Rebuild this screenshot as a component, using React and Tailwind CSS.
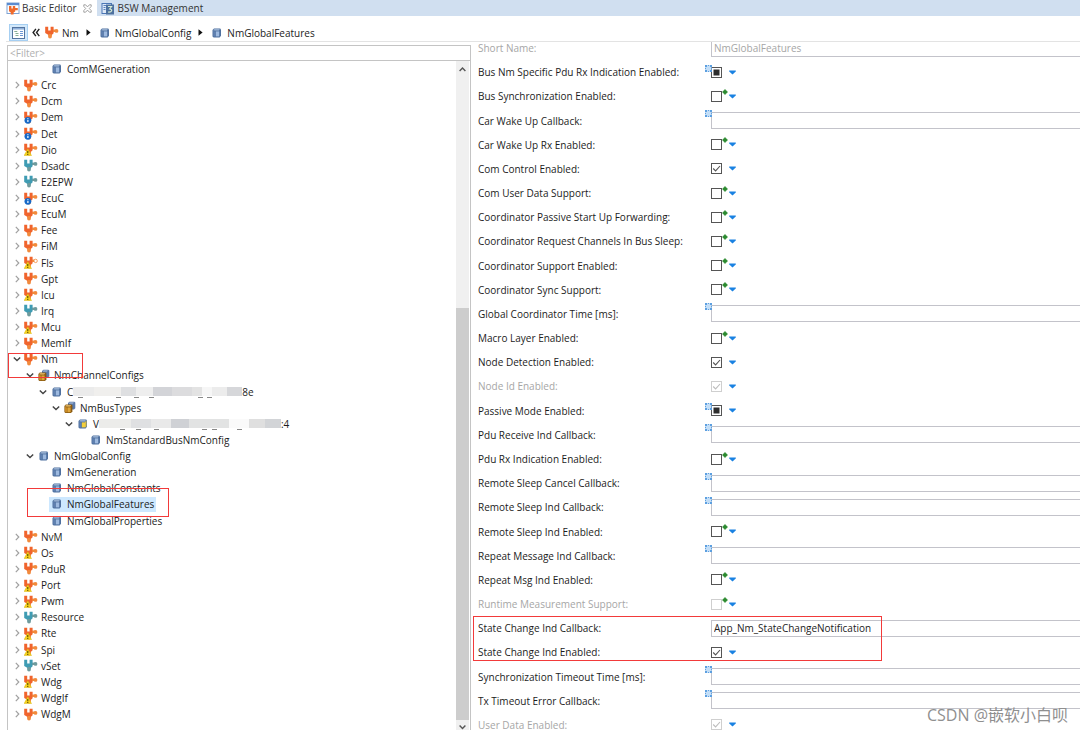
import { useState } from 'react';

const TREE = [
  { name: 'ComMGeneration', level: 2, icon: 'cube' },
  { name: 'Crc', icon: 'mod', closed: true },
  { name: 'Dcm', icon: 'mod', closed: true },
  { name: 'Dem', icon: 'mod', badge: 'info', closed: true },
  { name: 'Det', icon: 'mod', badge: 'info', closed: true },
  { name: 'Dio', icon: 'mod', badge: 'warn', closed: true },
  { name: 'Dsadc', icon: 'ext', closed: true },
  { name: 'E2EPW', icon: 'ext', closed: true },
  { name: 'EcuC', icon: 'mod', badge: 'info', closed: true },
  { name: 'EcuM', icon: 'mod', closed: true },
  { name: 'Fee', icon: 'mod', closed: true },
  { name: 'FiM', icon: 'mod', closed: true },
  { name: 'Fls', icon: 'mod', badge: 'warn', hollow: true, closed: true },
  { name: 'Gpt', icon: 'mod', closed: true },
  { name: 'Icu', icon: 'mod', badge: 'warn', closed: true },
  { name: 'Irq', icon: 'ext', closed: true },
  { name: 'Mcu', icon: 'mod', badge: 'warn', closed: true },
  { name: 'MemIf', icon: 'mod', closed: true },
  { name: 'Nm', icon: 'mod', open: true, mark: 'module' },
  { name: 'NmChannelConfigs', level: 1, icon: 'cubes', open: true },
  { name: 'C', tail: '8e', level: 2, icon: 'cube', open: true, mosaic: 'channel' },
  { name: 'NmBusTypes', level: 3, icon: 'cubes', open: true },
  { name: 'V', tail: ':4', level: 4, icon: 'variant', open: true, mosaic: 'bus' },
  { name: 'NmStandardBusNmConfig', level: 5, icon: 'cube' },
  { name: 'NmGlobalConfig', level: 1, icon: 'cube', open: true },
  { name: 'NmGeneration', level: 2, icon: 'cube' },
  { name: 'NmGlobalConstants', level: 2, icon: 'cube' },
  { name: 'NmGlobalFeatures', level: 2, icon: 'cube', selected: true, mark: 'item' },
  { name: 'NmGlobalProperties', level: 2, icon: 'cube' },
  { name: 'NvM', icon: 'mod', closed: true },
  { name: 'Os', icon: 'mod', badge: 'warn', closed: true },
  { name: 'PduR', icon: 'mod', closed: true },
  { name: 'Port', icon: 'mod', badge: 'warn', closed: true },
  { name: 'Pwm', icon: 'mod', badge: 'warn', closed: true },
  { name: 'Resource', icon: 'ext', closed: true },
  { name: 'Rte', icon: 'mod', badge: 'warn', closed: true },
  { name: 'Spi', icon: 'mod', badge: 'warn', closed: true },
  { name: 'vSet', icon: 'ext', closed: true },
  { name: 'Wdg', icon: 'mod', badge: 'warn', closed: true },
  { name: 'WdgIf', icon: 'mod', badge: 'warn', closed: true },
  { name: 'WdgM', icon: 'mod', closed: true },
];

// kind: text | on | off | mixed
const FIELDS = [
  { label: 'Short Name', kind: 'text', value: 'NmGlobalFeatures', disabled: true },
  { label: 'Bus Nm Specific Pdu Rx Indication Enabled', kind: 'mixed' },
  { label: 'Bus Synchronization Enabled', kind: 'off' },
  { label: 'Car Wake Up Callback', kind: 'text', unset: true },
  { label: 'Car Wake Up Rx Enabled', kind: 'off' },
  { label: 'Com Control Enabled', kind: 'on' },
  { label: 'Com User Data Support', kind: 'off' },
  { label: 'Coordinator Passive Start Up Forwarding', kind: 'off' },
  { label: 'Coordinator Request Channels In Bus Sleep', kind: 'off' },
  { label: 'Coordinator Support Enabled', kind: 'off' },
  { label: 'Coordinator Sync Support', kind: 'off' },
  { label: 'Global Coordinator Time [ms]', kind: 'text', unset: true },
  { label: 'Macro Layer Enabled', kind: 'off' },
  { label: 'Node Detection Enabled', kind: 'on' },
  { label: 'Node Id Enabled', kind: 'on', disabled: true },
  { label: 'Passive Mode Enabled', kind: 'mixed' },
  { label: 'Pdu Receive Ind Callback', kind: 'text', unset: true },
  { label: 'Pdu Rx Indication Enabled', kind: 'off' },
  { label: 'Remote Sleep Cancel Callback', kind: 'text', unset: true },
  { label: 'Remote Sleep Ind Callback', kind: 'text', unset: true },
  { label: 'Remote Sleep Ind Enabled', kind: 'off' },
  { label: 'Repeat Message Ind Callback', kind: 'text', unset: true },
  { label: 'Repeat Msg Ind Enabled', kind: 'off' },
  { label: 'Runtime Measurement Support', kind: 'off', disabled: true },
  { label: 'State Change Ind Callback', kind: 'text', value: 'App_Nm_StateChangeNotification', mark: true },
  { label: 'State Change Ind Enabled', kind: 'on' },
  { label: 'Synchronization Timeout Time [ms]', kind: 'text', unset: true },
  { label: 'Tx Timeout Error Callback', kind: 'text', unset: true },
  { label: 'User Data Enabled', kind: 'on', disabled: true },
];

const MOSAIC = {
  channel: {
    blocks: [[0, 21, '#ebebeb'], [21, 27, '#f0efed'], [48, 15, '#dedfe1'], [63, 17, '#eeeeee'], [80, 19, '#d3d4d8'], [99, 20, '#dcdcde'], [119, 10, '#e3e3e3'], [129, 10, '#f6f6f6'], [139, 15, '#ececec'], [154, 15, '#d6d7da']],
    bits: [[5, 5], [43, 5], [61, 5], [76, 5], [125, 5], [134, 5]],
  },
  bus: {
    blocks: [[0, 32, '#ececea'], [32, 20, '#dfe0e2'], [52, 20, '#e9e9e9'], [72, 18, '#cfd1d5'], [90, 40, '#e2e3e3'], [130, 20, '#fafafa'], [150, 16, '#dfdfdf'], [166, 16, '#d2d4d7']],
    bits: [[21, 5], [37, 5], [55, 5], [103, 5], [113, 5], [138, 5]],
  },
};

function Mosaic({ kind }) {
  const { blocks, bits } = MOSAIC[kind];
  const width = kind === 'channel' ? 169 : 182;
  return (
    <svg width={width} height="14" viewBox={`0 0 ${width} 14`} className="shrink-0" aria-hidden="true">
      {blocks.map(([x, w, fill]) => <rect key={x} x={x} y="2" width={w} height="9" fill={fill} />)}
      {bits.map(([x, w]) => <rect key={x} x={x} y="12" width={w} height="1" fill="#888" />)}
    </svg>
  );
}

function ModuleIcon({ ext, badge, hollow }) {
  const main = ext ? '#3f9cb3' : '#f0642d';
  const arm = ext ? '#6f9a9c' : '#f18a3c';
  return (
    <svg width="14" height="13" viewBox="0 0 14 13" className="shrink-0" aria-hidden="true">
      <path d="M0.2 0.8h3v3.6h2.4V0.8h3v3h2.2v2.2H8.6v1.2L7 8.8v1H3.2v-1L0.2 7z" fill={main} />
      <path d="M3.6 8h2.8v2H3.6z" fill={arm} />
      <circle cx="5" cy="10.6" r="1.9" fill={arm} />
      <path d="M8.2 3.8h3v2.2h-3z" fill={arm} />
      {hollow
        ? <circle cx="11.6" cy="4.9" r="1.7" fill="#fff" stroke={arm} strokeWidth="0.8" />
        : <circle cx="11.5" cy="4.9" r="1.9" fill={arm} />}
      {badge === 'info' && (
        <g>
          <circle cx="3.9" cy="9.3" r="3.4" fill="#1769c7" />
          <path d="M3.3 8.9h1.2v2.2H3.3zM3.3 7.2h1.2v1H3.3z" fill="#fff" />
        </g>
      )}
      {badge === 'warn' && (
        <g>
          <path d="M3.8 5.8L7.5 12.6H0.1z" fill="#f5d21c" stroke="#d8b510" strokeWidth="0.5" />
          <path d="M3.3 8h1v2.2h-1zM3.3 10.9h1v1h-1z" fill="#4a3d00" />
        </g>
      )}
    </svg>
  );
}

function CubeIcon({ variant }) {
  return (
    <svg width="14" height="12" viewBox="0 0 14 12" className="shrink-0" aria-hidden="true">
      <path d="M2.5 3L4 1.6h6.2L11 2.4v6.4L9.6 10.4H3.6L2.5 9.4z" fill="#4f709f" />
      <path d="M3.2 3.2L4.4 2.2h5.4l-1 1.4H5.6z" fill="#a9c0de" />
      <path d="M3.2 4l2 0.6v5H4L3.2 9z" fill="#5f80b0" />
      <path d="M5.8 4.4h3.4v5H5.8z" fill={variant ? '#f4cf3a' : '#9db9df'} />
      {variant && <path d="M9.2 3.8l1.2-1v5.8l-1.2 1z" fill="#f4cf3a" />}
    </svg>
  );
}

function CubesIcon() {
  return (
    <svg width="14" height="13" viewBox="0 0 14 13" className="shrink-0" aria-hidden="true">
      <path d="M5 2l1.4-1.2h5L12.3 1.6v5.6L11 8.6H5z" fill="#5b79a8" />
      <path d="M6 2l0.8-0.6h4L10 2.4H6z" fill="#b4c8e2" />
      <path d="M1.4 5L2.8 3.4h5.6L9.4 4.2v6.2L8 12H2.4L1.4 11z" fill="#8a5a10" />
      <path d="M2 5.2l1-1h5.2L7.2 5.6H4z" fill="#f0c772" />
      <path d="M2 6l2 0.6v4.6H2.8L2 10.6z" fill="#c98a24" />
      <path d="M4.4 6.4h3.2v4.8H4.4z" fill="#e0a63c" />
    </svg>
  );
}

function NodeIcon({ node }) {
  if (node.icon === 'cubes') return <CubesIcon />;
  if (node.icon === 'cube') return <CubeIcon />;
  if (node.icon === 'variant') return <CubeIcon variant />;
  return <ModuleIcon ext={node.icon === 'ext'} badge={node.badge} hollow={node.hollow} />;
}

function Twisty({ open, closed }) {
  return (
    <svg width="10" height="10" viewBox="0 0 10 10" className="shrink-0" fill="none" aria-hidden="true">
      {open && <path d="M1.8 3.5L5 6.6L8.2 3.5" stroke="#444" strokeWidth="1.4" />}
      {closed && <path d="M3.8 1.8L6.8 5L3.8 8.2" stroke="#a0a0a0" strokeWidth="1.2" />}
    </svg>
  );
}

function TreeRow({ node, selected, onSelect }) {
  const indent = 4 + (node.level || 0) * 13;
  return (
    <li className="relative flex min-h-0 flex-1 items-center" style={{ paddingLeft: indent }}>
      <Twisty open={node.open} closed={node.closed} />
      <button
        type="button"
        onClick={onSelect}
        className={`ml-px flex h-[15px] items-center pl-px pr-0.5 ${selected ? 'bg-[#cde8ff]' : ''}`}
      >
        <NodeIcon node={node} />
        <span className="ml-[3px] whitespace-nowrap">{node.name}</span>
        {node.mosaic && <Mosaic kind={node.mosaic} />}
        {node.tail && <span>{node.tail}</span>}
      </button>
      {node.mark === 'module' && <span className="pointer-events-none absolute left-0 top-0.5 z-10 h-[25px] w-[75px] border border-[#f23a3a]" />}
      {node.mark === 'item' && <span className="pointer-events-none absolute -top-2 left-[19px] z-10 h-[29px] w-[142px] border border-[#f23a3a]" />}
    </li>
  );
}

function UnsetMark() {
  return (
    <svg width="7" height="7" viewBox="0 0 7 7" className="absolute -left-1.5 -top-0.5" aria-hidden="true">
      <rect x="0.5" y="0.5" width="6" height="6" fill="#c3def7" />
      <path d="M0 0h2v2H0zM2.8 0h1.4v1H2.8zM5 0h2v2H5zM0 5h2v2H0zM2.8 6h1.4v1H2.8zM5 5h2v2H5zM0 2.8h1v1.4H0zM6 2.8h1v1.4H6z" fill="#5c9fe0" />
    </svg>
  );
}

function Field({ field }) {
  const [value, setValue] = useState(field.value || '');
  const [state, setState] = useState(field.kind);
  const id = field.label.toLowerCase().replace(/[^a-z]+/g, '-');
  const grey = field.disabled;

  return (
    <div className="relative flex min-h-0 flex-1 items-center">
      <label htmlFor={id} className={`w-[235px] shrink-0 pl-0.5 leading-[10px] ${grey ? 'text-[#a6a6a6]' : ''}`}>{field.label}:</label>
      {field.kind === 'text' ? (
        <div className="relative min-w-0 flex-1">
          {field.unset && <UnsetMark />}
          <input
            id={id}
            type="text"
            value={value}
            disabled={grey}
            onChange={(e) => setValue(e.target.value)}
            className={`block h-[17px] w-full border border-r-0 border-[#c3c3ca] bg-white px-0.5 focus:outline-none ${grey ? 'text-[#a6a6a6]' : ''}`}
          />
        </div>
      ) : (
        <div className="relative flex items-center">
          {state === 'mixed' && <UnsetMark />}
          <input
            id={id}
            type="checkbox"
            checked={state === 'on'}
            disabled={grey}
            onChange={() => setState(state === 'on' ? 'off' : 'on')}
            className={`size-[11px] appearance-none border bg-white ${grey ? 'border-[#cfcfcf]' : 'border-[#555]'}`}
          />
          <svg width="11" height="11" viewBox="0 0 11 11" className="pointer-events-none absolute left-0 top-0" fill="none" aria-hidden="true">
            {state === 'on' && <path d="M2.2 5.5L4.6 7.9L9 3" stroke={grey ? '#bdbdbd' : '#555'} strokeWidth="1.1" />}
            {state === 'mixed' && <rect x="2.5" y="2.5" width="6" height="6" fill="#2d2d2d" />}
          </svg>
          {state === 'off' && (
            <svg width="6" height="6" viewBox="0 0 6 6" className="absolute -top-0.5 left-[11px]" aria-hidden="true">
              <circle cx="3" cy="3" r="2.1" fill="#2c8a30" />
              <path d="M3 0.2v5.6M0.2 3h5.6" stroke="#2c8a30" strokeWidth="1.1" />
            </svg>
          )}
          <button type="button" aria-label={`${field.label} options`} className="ml-[7px]">
            <svg width="7" height="5" viewBox="0 0 7 5" className="block" aria-hidden="true">
              <path d="M0.2 0.6h6.6v0.8L3.5 4.6L0.2 1.4z" fill="#1a82e2" />
            </svg>
          </button>
        </div>
      )}
      {field.mark && <span className="pointer-events-none absolute -left-[3px] top-0 z-10 h-[45px] w-[409px] border border-[#f23a3a]" />}
    </div>
  );
}

function Crumb({ icon, children }) {
  return (
    <a href="#" className="flex items-center gap-[3px]">
      {icon}
      {children}
    </a>
  );
}

function CrumbArrow() {
  return (
    <svg width="5" height="7" viewBox="0 0 5 7" className="shrink-0" aria-hidden="true">
      <path d="M0.5 0.3L4.6 3.5L0.5 6.7z" fill="#111" />
    </svg>
  );
}

export default function App() {
  const [selected, setSelected] = useState('NmGlobalFeatures');

  return (
    <div className="relative flex h-screen flex-col overflow-hidden bg-white font-['Open_Sans','Noto_Sans_CJK_SC',sans-serif] text-[10px] leading-[14px] text-[#1c1c1c]">
      <div role="tablist" className="flex h-4 shrink-0 bg-[#d0dff0] text-[#333]">
        <button type="button" role="tab" aria-selected="true" className="flex items-center bg-white pl-1.5 pr-[5px]">
          <svg width="14" height="13" viewBox="0 0 14 13" aria-hidden="true">
            <rect x="1" y="1" width="12" height="10.5" fill="#fff" stroke="#7fa3d4" />
            <rect x="1" y="1" width="12" height="2.2" fill="#5b8bd0" />
            <path d="M3 4h2.4v2.6h1.4V4h2.4v2h2.6v2.2H9.2v1.2L7.6 10.4v2.2H4.8v-2.2L3 9.2z" fill="#ef6a2c" />
          </svg>
          <span className="ml-0.5 whitespace-nowrap">Basic Editor</span>
          <svg width="9" height="9" viewBox="0 0 9 9" className="ml-1.5" fill="none" stroke="#8b8b8b" strokeWidth="0.8" aria-hidden="true">
            <path d="M0.8 0.8h1.8l1.9 2.1L6.4 0.8h1.8v1.6L6.3 4.5l1.9 2.1v1.6H6.4L4.5 6.1L2.6 8.2H0.8V6.6l1.9-2.1L0.8 2.4z" />
          </svg>
        </button>
        <button type="button" role="tab" aria-selected="false" className="flex items-center pl-1">
          <svg width="14" height="13" viewBox="0 0 14 13" aria-hidden="true">
            <rect x="1" y="1.5" width="9.5" height="10" fill="#dfe9f7" stroke="#4b76b5" />
            <path d="M2.5 3.5h3M2.5 5.5h2M2.5 7.5h2" stroke="#4b76b5" strokeWidth="0.9" />
            <rect x="5" y="2.5" width="8" height="10" fill="#4d719f" />
            <path d="M7 4.5h3.6L8.6 7c3.4 0 2.6 3.6-1.6 3" fill="none" stroke="#d9ecd4" strokeWidth="1.1" />
          </svg>
          <span className="ml-[3px] whitespace-nowrap">BSW Management</span>
        </button>
      </div>

      <nav className="ml-1.5 flex h-[26px] shrink-0 items-center border-b border-[#e3e3e3] pl-[3px] pt-2">
        <button type="button" aria-label="Show tree" className="flex h-[17px] w-[19px] items-center justify-center border border-[#a6cff2] bg-[#d3e9fb]">
          <svg width="13" height="12" viewBox="0 0 13 12" aria-hidden="true">
            <rect x="0.5" y="0.5" width="12" height="11" fill="#fff" stroke="#54749f" />
            <rect x="1" y="1" width="11" height="1.6" fill="#8fb0da" />
            <path d="M2.3 4.5h3M3.5 6.5h3M3.5 8.5h3" stroke="#79a68a" strokeWidth="0.9" />
            <path d="M8 4.5h3M8 6.5h3M8 8.5h3" stroke="#5b8bd0" strokeWidth="0.9" />
          </svg>
        </button>
        <svg width="8" height="9" viewBox="0 0 8 9" className="ml-1 mr-[5px]" fill="none" stroke="#222" strokeWidth="1.4" aria-hidden="true">
          <path d="M3.9 0.8L1.1 4.5L3.9 8.2M7.3 0.8L4.5 4.5L7.3 8.2" />
        </svg>
        <div className="flex items-center gap-[7px]">
          <Crumb icon={<ModuleIcon />}>Nm</Crumb>
          <CrumbArrow />
          <Crumb icon={<CubeIcon />}>NmGlobalConfig</Crumb>
          <CrumbArrow />
          <Crumb icon={<CubeIcon />}>NmGlobalFeatures</Crumb>
        </div>
      </nav>

      <main className="flex min-h-0 flex-1">
        <aside className="ml-[7px] mt-[3px] flex w-[464px] shrink-0 flex-col border-x border-[#c4c4c4]">
          <input
            type="text"
            aria-label="Filter"
            placeholder="<Filter>"
            className="h-4 w-full shrink-0 border-y border-[#c4c4c4] px-0.5 placeholder:text-[#b0b0b0] focus:outline-none"
          />
          <div className="flex min-h-0 flex-1">
            <ul className="mb-2 flex min-w-0 flex-1 flex-col">
              {TREE.map((node) => (
                <TreeRow key={node.name} node={node} selected={selected === node.name} onSelect={() => setSelected(node.name)} />
              ))}
            </ul>
            <div className="mr-px flex w-[13px] flex-col items-center bg-[#f0f0f0]">
              <svg width="13" height="16" viewBox="0 0 13 16" fill="none" stroke="#555" strokeWidth="1.4" aria-hidden="true">
                <path d="M3.6 10L6.5 7L9.4 10" />
              </svg>
              <div className="flex w-full flex-1 flex-col justify-end">
                <div className="h-[64%] bg-[#cdcdcd]" />
              </div>
              <svg width="13" height="10" viewBox="0 0 13 10" fill="none" stroke="#555" strokeWidth="1.4" aria-hidden="true">
                <path d="M3.6 5.5L6.5 8.5L9.4 5.5" />
              </svg>
            </div>
          </div>
        </aside>

        {/* settings list is scrolled, so the first and last rows are cut */}
        <section className="min-w-0 flex-1 overflow-hidden pl-[5px]">
          <form className="-mt-1.5 flex h-[calc(100%+13px)] flex-col">
            {FIELDS.map((field) => <Field key={field.label} field={field} />)}
          </form>
        </section>
      </main>

      <div className="pointer-events-none absolute bottom-1 right-3 text-[16px] leading-[22px] text-[#8f8f8f]">CSDN @嵌软小白呗</div>
    </div>
  );
}
